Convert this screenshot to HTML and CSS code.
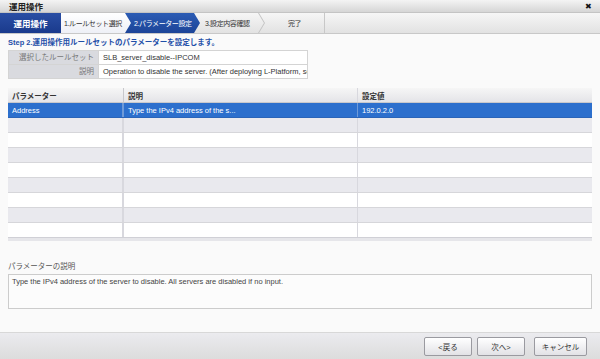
FILE: index.html
```html
<!DOCTYPE html>
<html lang="ja">
<head>
  <meta charset="UTF-8">
  <title>運用操作</title>
  <link rel="stylesheet" href="styles.css">
</head>
<body>
  <div class="window">
    <div class="titlebar">
      <span class="title">運用操作</span>
      <span class="close">&#x2716;</span>
    </div>

    <div class="steps">
      <div class="step-head">運用操作</div>
      <div class="step done">1.ルールセット選択</div>
      <div class="step current">2.パラメーター設定</div>
      <div class="step next">3.設定内容確認</div>
      <div class="step last">完了</div>
      <div class="step-rest"></div>
    </div>

    <div class="content">
      <div class="step-title">Step 2.運用操作用ルールセットのパラメーターを設定します。</div>

      <table class="info">
        <colgroup>
          <col class="info-label">
          <col class="info-value">
        </colgroup>
        <tr>
          <th>選択したルールセット</th>
          <td>SLB_server_disable--IPCOM</td>
        </tr>
        <tr>
          <th>説明</th>
          <td>Operation to disable the server. (After deploying L-Platform, se</td>
        </tr>
      </table>

      <div class="grid">
        <div class="grid-row grid-header">
          <div class="cell c1">パラメーター</div>
          <div class="cell c2">説明</div>
          <div class="cell c3">設定値</div>
        </div>
        <div class="grid-row selected">
          <div class="cell c1">Address</div>
          <div class="cell c2">Type the IPv4 address of the s...</div>
          <div class="cell c3">192.0.2.0</div>
        </div>
        <div class="grid-row alt"><div class="cell c1"></div><div class="cell c2"></div><div class="cell c3"></div></div>
        <div class="grid-row"><div class="cell c1"></div><div class="cell c2"></div><div class="cell c3"></div></div>
        <div class="grid-row alt"><div class="cell c1"></div><div class="cell c2"></div><div class="cell c3"></div></div>
        <div class="grid-row"><div class="cell c1"></div><div class="cell c2"></div><div class="cell c3"></div></div>
        <div class="grid-row alt"><div class="cell c1"></div><div class="cell c2"></div><div class="cell c3"></div></div>
        <div class="grid-row"><div class="cell c1"></div><div class="cell c2"></div><div class="cell c3"></div></div>
        <div class="grid-row alt"><div class="cell c1"></div><div class="cell c2"></div><div class="cell c3"></div></div>
        <div class="grid-row"><div class="cell c1"></div><div class="cell c2"></div><div class="cell c3"></div></div>
        <div class="grid-row alt"><div class="cell c1"></div><div class="cell c2"></div><div class="cell c3"></div></div>
      </div>

      <div class="desc-label">パラメーターの説明</div>
      <div class="desc-box">Type the IPv4 address of the server to disable. All servers are disabled if no input.</div>
    </div>

    <div class="footer">
      <button class="btn">&lt;戻る</button>
      <button class="btn">次へ&gt;</button>
      <button class="btn cancel">キャンセル</button>
    </div>
  </div>
</body>
</html>
```

FILE: styles.css
```css
body {
  margin: 0;
  font-family: "Liberation Sans", "Noto Sans CJK JP", sans-serif;
  font-size: 7.5px;
  color: #333;
  background: #fafafa;
}

.window {
  width: 600px;
  height: 359px;
  display: flex;
  flex-direction: column;
  overflow: hidden;
}

/* title bar */
.titlebar {
  height: 12px;
  display: flex;
  align-items: center;
  justify-content: space-between;
  padding: 0 8px 0 9px;
  background: linear-gradient(#f4f4f4, #d6d6d6);
  border-bottom: 1px solid #c4c4c4;
}

.title {
  font-weight: bold;
  font-size: 8.5px;
  color: #222;
}

.close {
  font-size: 8px;
  color: #111;
}

/* wizard steps */
.steps {
  height: 20px;
  display: flex;
  background: linear-gradient(#f6f6f6, #e2e2e2);
  border-bottom: 1px solid #c8c8c8;
}

.step-head {
  width: 61px;
  display: flex;
  align-items: center;
  justify-content: center;
  font-size: 8.5px;
  font-weight: bold;
  color: #fff;
  background: linear-gradient(#2a4ea4, #1a3a8c);
}

.step {
  position: relative;
  display: flex;
  align-items: center;
  box-sizing: border-box;
  white-space: nowrap;
  font-size: 7px;
  letter-spacing: -0.4px;
  color: #333;
}

.step.done {
  width: 64px;
  padding-left: 3px;
  background: linear-gradient(#ffffff, #eef0f6);
  z-index: 3;
}

.step.current {
  width: 69px;
  padding-left: 9px;
  color: #fff;
  background: linear-gradient(#2c5cb4, #1c4498);
  z-index: 2;
}

.step.next {
  width: 65px;
  padding-left: 11px;
  z-index: 1;
}

.step.last {
  width: 66px;
  padding-left: 29px;
  border-right: 1px solid #c8c8c8;
}

.step-rest {
  flex: 1;
}

.step.done::after,
.step.current::after {
  content: "";
  position: absolute;
  top: 0;
  right: -6px;
  width: 6px;
  height: 20px;
  clip-path: polygon(0 0, 100% 50%, 0 100%);
}

.step.done::after {
  background: linear-gradient(#ffffff, #eef0f6);
}

.step.current::after {
  background: linear-gradient(#2c5cb4, #1c4498);
}

.step.next::after {
  content: "";
  position: absolute;
  top: 0;
  right: -6px;
  width: 7px;
  height: 20px;
  background: #c4c4c4;
  clip-path: polygon(0 0, 15% 0, 100% 50%, 15% 100%, 0 100%, 85% 50%);
}

/* main content */
.content {
  flex: 1;
  padding: 0 8px;
}

.step-title {
  margin: 3px 0 2px;
  font-size: 7.5px;
  font-weight: bold;
  color: #1f4fa8;
  line-height: 11px;
}

.info {
  width: 300px;
  table-layout: fixed;
  border-collapse: collapse;
}

.info-label {
  width: 90px;
}

.info th,
.info td {
  height: 13px;
  padding: 0 4px;
  border: 1px solid #d4d4d4;
  line-height: 12px;
  white-space: nowrap;
  overflow: hidden;
}

.info th {
  text-align: right;
  font-weight: normal;
  color: #777;
  background: #d9dadf;
}

.info td {
  background: #fff;
}

/* parameter grid */
.grid {
  margin-top: 9px;
  height: 150px;
  overflow: hidden;
  border-bottom: 3px solid #e6e6ea;
  position: relative;
}

.grid::after {
  content: "";
  position: absolute;
  left: 0;
  right: 0;
  bottom: 0;
  height: 1px;
  background: #d0d0d6;
}

.grid-row {
  display: flex;
  height: 15px;
  background: #fff;
  border-bottom: 1px solid #d6d6da;
  box-sizing: border-box;
}

.grid-row.alt {
  background: #e9e9ee;
}

.grid-header {
  background: linear-gradient(#f6f6f6, #e4e4e8);
  border-bottom: 1px solid #c8c8cc;
  font-weight: bold;
  color: #333;
}

.grid-row.selected {
  background: #2c6fcd;
  color: #fff;
  border-bottom: 1px solid #2a64b8;
}

.cell {
  display: flex;
  align-items: center;
  padding: 0 4px;
  white-space: nowrap;
  overflow: hidden;
  box-sizing: border-box;
}

.c1 {
  width: 116px;
  border-right: 2px solid #d8d8de;
}

.c2 {
  width: 234px;
  border-right: 1px solid #d8d8de;
}

.c3 {
  flex: 1;
}

.grid-header .cell {
  padding-top: 1px;
}

.grid-header .c1 {
  border-right: 1px solid #c8c8cc;
}

.selected .cell {
  border-right-color: #6e9ad8;
}

/* description */
.desc-label {
  margin-top: 20px;
  color: #555;
  line-height: 11px;
}

.desc-box {
  margin-top: 2px;
  height: 35px;
  padding: 2px 3px;
  box-sizing: border-box;
  border: 1px solid #cccccc;
  background: #fcfcfc;
  color: #444;
}

/* footer */
.footer {
  height: 26px;
  display: flex;
  align-items: center;
  justify-content: flex-end;
  padding-right: 13px;
  background: linear-gradient(#ebebef, #dcdcdc);
  border-top: 1px solid #d8d8d8;
}

.btn {
  width: 48px;
  height: 19px;
  margin-left: 5px;
  padding: 0;
  font-family: "Liberation Sans", "Noto Sans CJK JP", sans-serif;
  font-size: 7.5px;
  color: #333;
  background: linear-gradient(#ffffff, #e2e2e6);
  border: 1px solid #9a9aa0;
  border-radius: 2px;
}

.btn.cancel {
  width: 53px;
  margin-left: 9px;
}
```
